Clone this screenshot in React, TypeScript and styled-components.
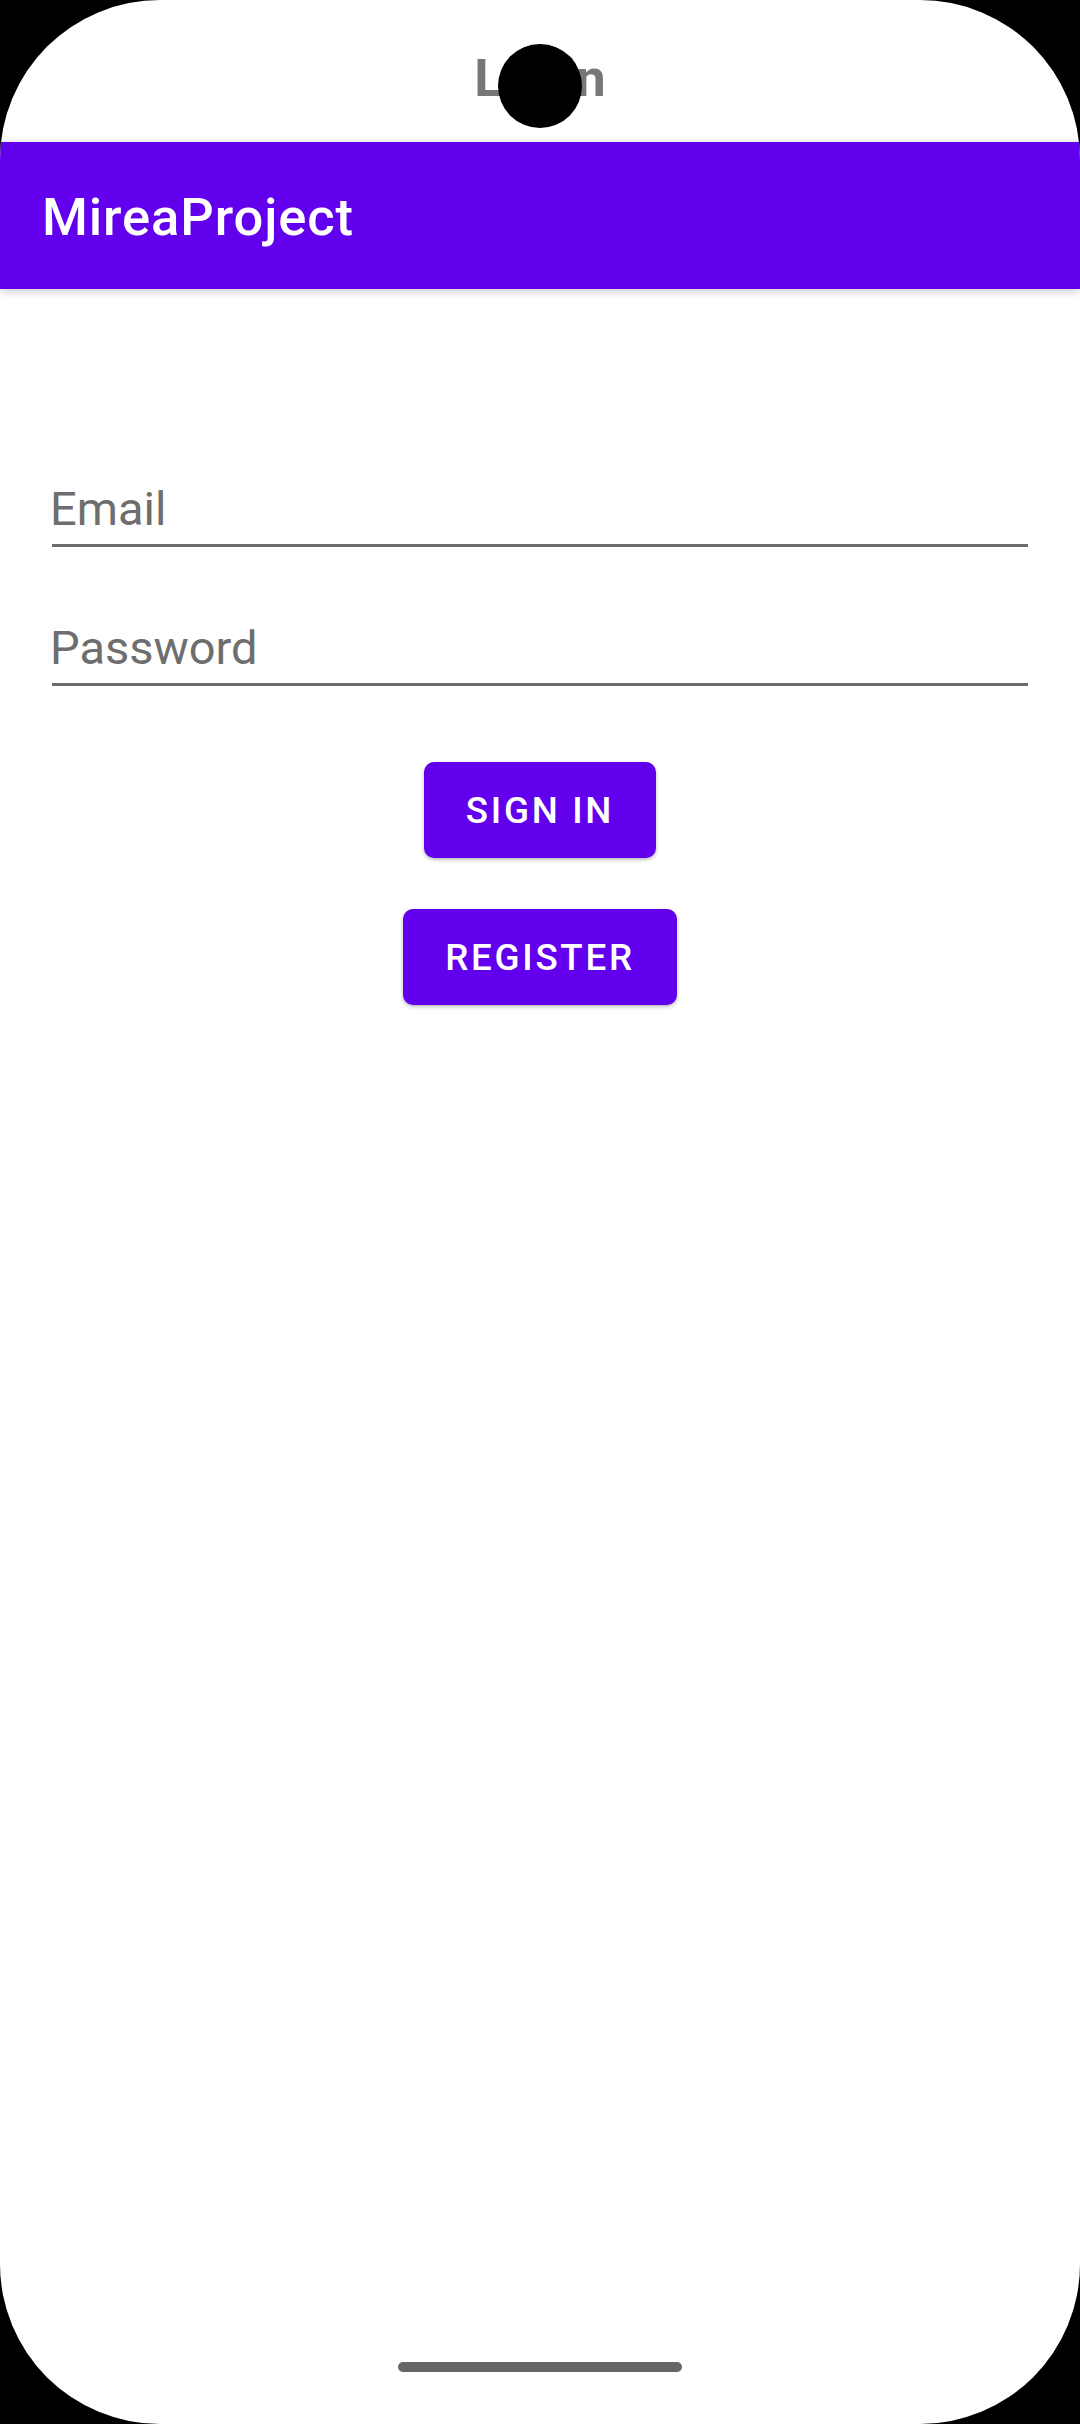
import React from "react";
import styled, { createGlobalStyle } from "styled-components";

const Global = createGlobalStyle`
  html, body { margin: 0; padding: 0; background: #000; }
  body { font-family: Roboto, "Noto Sans", Arial, sans-serif; }
  * { box-sizing: border-box; }
`;

const Screen = styled.div`
  position: relative;
  width: 1080px;
  height: 2424px;
  background: #ffffff;
  border-radius: 160px;
  overflow: hidden;
  display: flex;
  flex-direction: column;
`;

const StatusBar = styled.div`
  height: 142px;
  flex-shrink: 0;
  display: flex;
  align-items: flex-start;
  justify-content: center;
`;

const WindowTitle = styled.div`
  margin-top: 47px;
  font-size: 52.5px;
  font-weight: 700;
  line-height: 62px;
  color: #777777;
`;

const Camera = styled.div`
  position: absolute;
  left: 498px;
  top: 44px;
  width: 84px;
  height: 84px;
  border-radius: 50%;
  background: #000;
`;

const AppBar = styled.header`
  height: 147px;
  flex-shrink: 0;
  background: #6200ee;
  display: flex;
  align-items: center;
  padding: 0 42px;
  box-shadow: 0 3px 8px rgba(0, 0, 0, 0.18), 0 -1px 3px rgba(0, 0, 0, 0.08);
  position: relative;
  z-index: 1;
`;

const AppTitle = styled.h1`
  margin: 0;
  font-size: 52.5px;
  font-weight: 500;
  letter-spacing: 0.9px;
  color: #ffffff;
  line-height: 62px;
  margin-top: 2px;
`;

const Content = styled.main`
  flex: 1;
  display: flex;
  flex-direction: column;
  padding: 192px 52px 0;
`;

const Field = styled.div<{ $gap?: number }>`
  margin-top: ${(p) => p.$gap ?? 0}px;
  border-bottom: 3px solid #6b6b6b;
  padding-bottom: 7px;
`;

const Hint = styled.div`
  font-size: 47px;
  line-height: 56px;
  color: #6e6e6e;
  margin-left: -2px;
`;

const Actions = styled.div`
  display: flex;
  flex-direction: column;
  align-items: center;
  gap: 51px;
  margin-top: 76px;
`;

const Button = styled.button`
  height: 96px;
  padding: 0 42px;
  border: none;
  border-radius: 10px;
  background: #6200ee;
  color: #ffffff;
  font-family: Roboto, "Noto Sans", Arial, sans-serif;
  font-size: 36.75px;
  font-weight: 500;
  letter-spacing: 2.7px;
  text-transform: uppercase;
  box-shadow: 0 2px 4px rgba(0, 0, 0, 0.22), 0 1px 2px rgba(0, 0, 0, 0.1);
`;

const NavArea = styled.div`
  height: 62px;
  flex-shrink: 0;
  display: flex;
  justify-content: center;
  align-items: flex-start;
`;

const HomeIndicator = styled.div`
  width: 284px;
  height: 10px;
  border-radius: 5px;
  background: #666666;
`;

export default function App() {
  return (
    <>
      <Global />
      <Screen>
        <StatusBar>
          <WindowTitle>Login</WindowTitle>
        </StatusBar>
        <Camera />
        <AppBar>
          <AppTitle>MireaProject</AppTitle>
        </AppBar>
        <Content>
          <Field>
            <Hint>Email</Hint>
          </Field>
          <Field $gap={73}>
            <Hint>Password</Hint>
          </Field>
          <Actions>
            <Button>Sign in</Button>
            <Button>Register</Button>
          </Actions>
        </Content>
        <NavArea>
          <HomeIndicator />
        </NavArea>
      </Screen>
    </>
  );
}
